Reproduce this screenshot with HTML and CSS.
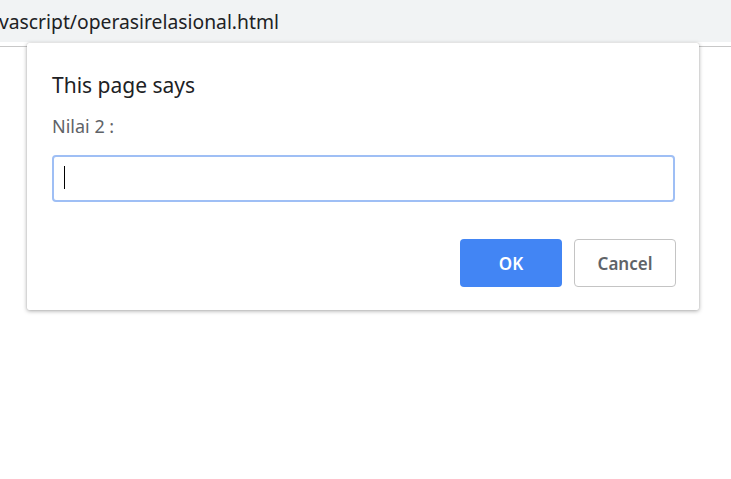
FILE: index.html
```html
<!DOCTYPE html>
<html>
<head>
<meta charset="utf-8">
<link rel="stylesheet" href="styles.css">
</head>
<body>
<div class="topbar">
  <span class="url">vascript/operasirelasional.html</span>
</div>
<div class="rule"></div>
<div class="dialog">
  <div class="title">This page says</div>
  <div class="msg">Nilai 2 :</div>
  <div class="input"><span class="caret"></span></div>
  <div class="actions">
    <button class="btn ok">OK</button>
    <button class="btn cancel">Cancel</button>
  </div>
</div>
</body>
</html>
```
FILE: styles.css
```css
html, body {
  margin: 0;
  padding: 0;
  background: #ffffff;
  width: 731px;
  height: 479px;
  overflow: hidden;
  font-family: "Noto Sans", "Open Sans", sans-serif;
}
.topbar {
  height: 42px;
  background: #f1f3f4;
  display: flex;
  align-items: center;
  overflow: hidden;
}
.url {
  font-size: 19.3px;
  color: #202124;
  margin-left: -1px;
  white-space: nowrap;
  position: relative;
  top: 0px;
}
.rule {
  margin-top: 4px;
  height: 1px;
  background: #c8c8c8;
}
.dialog {
  position: absolute;
  left: 27px;
  top: 43px;
  width: 672px;
  height: 267px;
  box-sizing: border-box;
  background: #ffffff;
  border-radius: 2px;
  box-shadow: 0 1px 4px rgba(0,0,0,0.35), 0 0 1px rgba(0,0,0,0.2);
  padding: 28px 23px 0 25px;
}
.title {
  font-size: 21px;
  color: #202124;
  line-height: 28px;
}
.msg {
  margin-top: 15px;
  font-size: 18px;
  line-height: 24px;
  color: #5f6368;
}
.input {
  margin-top: 17px;
  margin-right: 1px;
  height: 47px;
  box-sizing: border-box;
  border: 2px solid #9fbff5;
  border-radius: 4px;
  position: relative;
}
.caret {
  position: absolute;
  left: 10px;
  top: 9px;
  width: 1px;
  height: 23px;
  background: #000;
}
.actions {
  margin-top: 37px;
  display: flex;
  justify-content: flex-end;
  gap: 12px;
}
.btn {
  width: 102px;
  height: 48px;
  border-radius: 4px;
  font-family: "Noto Sans", "Open Sans", sans-serif;
  font-size: 17px;
  font-weight: 600;
  cursor: default;
}
.ok {
  background: #4285f4;
  color: #ffffff;
  border: none;
}
.cancel {
  background: #ffffff;
  color: #5f6368;
  border: 1px solid #c4c4c4;
}
```
